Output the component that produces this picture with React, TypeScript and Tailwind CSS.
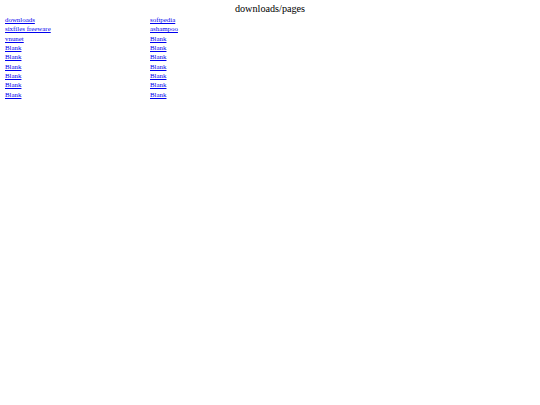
const left = ['downloads', 'sixfiles freeware', 'vnunet', 'Blank', 'Blank', 'Blank', 'Blank', 'Blank', 'Blank'];
const right = ['softpedia', 'ashampoo', 'Blank', 'Blank', 'Blank', 'Blank', 'Blank', 'Blank', 'Blank'];

export default function App() {
  return (
    <div className="min-h-[405px] bg-white font-['Liberation_Serif',serif] text-black">
      <div className="pt-[3px] text-center text-[10.2px] leading-[12px]">downloads/pages</div>
      <div className="grid grid-cols-[145px_1fr] pl-[5px] text-[6.9px] leading-[9.33px]">
        {left.map((l, i) => (
          <div key={i} className="contents">
            <a href="#" className="justify-self-start text-[#0000ee] underline">{l}</a>
            <a href="#" className="justify-self-start text-[#0000ee] underline">{right[i]}</a>
          </div>
        ))}
      </div>
    </div>
  );
}
